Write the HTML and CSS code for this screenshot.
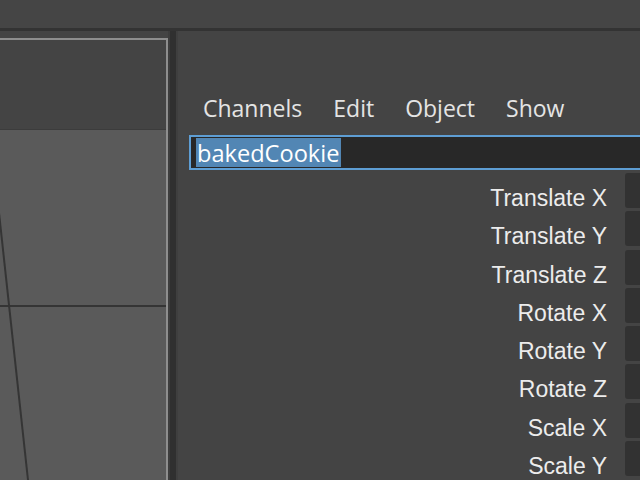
FILE: index.html
```html
<!DOCTYPE html>
<html lang="en">
<head>
  <meta charset="UTF-8">
  <title>Channel Box</title>
  <link rel="stylesheet" href="styles.css">
</head>
<body>
  <div class="topbar"></div>

  <div class="workspace">
    <div class="viewport-wrap">
      <div class="viewport">
        <div class="vp-head"></div>
        <div class="vp-grid">
          <svg class="grid-lines" width="166" height="360" viewBox="0 0 166 360">
            <line x1="0" y1="176" x2="166" y2="176" stroke="#353535" stroke-width="2"/>
            <line x1="-10" y1="0" x2="28" y2="350" stroke="#353535" stroke-width="2"/>
          </svg>
        </div>
      </div>
    </div>

    <div class="splitter"></div>

    <div class="channel-box">
      <nav class="menu">
        <span>Channels</span>
        <span>Edit</span>
        <span>Object</span>
        <span>Show</span>
      </nav>

      <div class="name-field"><span class="sel">bakedCookie</span></div>

      <div class="attrs">
        <div class="attr"><span class="label">Translate X</span><span class="value"></span></div>
        <div class="attr"><span class="label">Translate Y</span><span class="value"></span></div>
        <div class="attr"><span class="label">Translate Z</span><span class="value"></span></div>
        <div class="attr"><span class="label">Rotate X</span><span class="value"></span></div>
        <div class="attr"><span class="label">Rotate Y</span><span class="value"></span></div>
        <div class="attr"><span class="label">Rotate Z</span><span class="value"></span></div>
        <div class="attr"><span class="label">Scale X</span><span class="value"></span></div>
        <div class="attr"><span class="label">Scale Y</span><span class="value"></span></div>
      </div>
    </div>
  </div>
</body>
</html>
```

FILE: styles.css
```css
* { box-sizing: border-box; }

body {
  margin: 0;
  width: 640px;
  height: 480px;
  overflow: hidden;
  background: #444;
  color: #e6e6e6;
  font-family: 'Open Sans', 'Noto Sans', sans-serif;
}

.topbar {
  height: 31px;
  background: #454545;
  border-bottom: 3px solid #333;
}

.workspace {
  display: flex;
  height: 449px;
  overflow: hidden;
}

.viewport-wrap {
  flex: 0 0 168px;
  padding-top: 7px;
}

.viewport {
  height: 100%;
  border-top: 2px solid #8e8e8e;
  border-right: 2px solid #8e8e8e;
  display: flex;
  flex-direction: column;
}

.vp-head {
  height: 90px;
  background: #444;
  border-bottom: 1px solid #3c3c3c;
}

.vp-grid {
  flex: 1;
  background: #5a5a5a;
  overflow: hidden;
}

.grid-lines { display: block; }

.splitter {
  flex: 0 0 10px;
  border-left: 2px solid #3d3d3d;
  border-right: 2px solid #3f3f3f;
  background: #303030;
}

.channel-box {
  flex: 1;
  padding-top: 62px;
  overflow: hidden;
}

.menu {
  display: flex;
  gap: 31px;
  padding-left: 25px;
  font-size: 23px;
  line-height: 30px;
  height: 30px;
  color: #e4e4e4;
  margin-bottom: 12px;
}

.name-field {
  margin-left: 11px;
  height: 35px;
  border: 2px solid #5e9ed4;
  border-right: none;
  background: #282828;
  padding: 1px 0 0 5px;
}

.sel {
  display: inline-block;
  height: 29px;
  line-height: 30px;
  padding: 0 2px 0 1px;
  font-size: 23.6px;
  color: #fff;
  background: #5286b4;
}

.attrs {
  margin-top: 3px;
  margin-right: -20px;
  display: flex;
  flex-direction: column;
  gap: 3.3px;
}

.attr {
  display: flex;
  justify-content: flex-end;
  height: 35px;
}

.label {
  font-family: 'Liberation Sans', Arial, sans-serif;
  font-size: 23px;
  line-height: 23px;
  padding-top: 14px;
  margin-right: 18px;
  color: #ececec;
}

.value {
  flex: 0 0 35px;
  background: #323232;
  border-radius: 3px;
}
```
